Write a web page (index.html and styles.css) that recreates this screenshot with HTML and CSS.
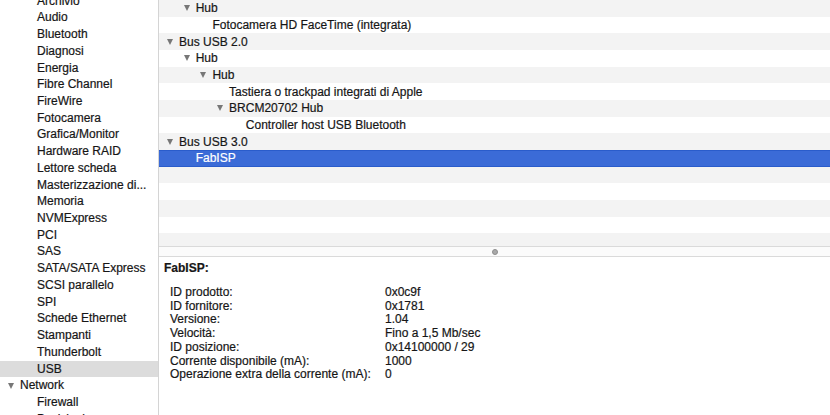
FILE: index.html
```html
<!DOCTYPE html>
<html lang="it">
<head>
<meta charset="utf-8">
<title>Informazioni di sistema - USB</title>
<link rel="stylesheet" href="styles.css">
</head>
<body>
<div class="window">
  <aside class="sidebar">
    <ul class="side-list">
      <li class="side-item">Archivio</li>
      <li class="side-item">Audio</li>
      <li class="side-item">Bluetooth</li>
      <li class="side-item">Diagnosi</li>
      <li class="side-item">Energia</li>
      <li class="side-item">Fibre Channel</li>
      <li class="side-item">FireWire</li>
      <li class="side-item">Fotocamera</li>
      <li class="side-item">Grafica/Monitor</li>
      <li class="side-item">Hardware RAID</li>
      <li class="side-item">Lettore scheda</li>
      <li class="side-item">Masterizzazione di...</li>
      <li class="side-item">Memoria</li>
      <li class="side-item">NVMExpress</li>
      <li class="side-item">PCI</li>
      <li class="side-item">SAS</li>
      <li class="side-item">SATA/SATA Express</li>
      <li class="side-item">SCSI parallelo</li>
      <li class="side-item">SPI</li>
      <li class="side-item">Schede Ethernet</li>
      <li class="side-item">Stampanti</li>
      <li class="side-item">Thunderbolt</li>
      <li class="side-item is-selected">USB</li>
      <li class="side-group"><span class="disclosure"></span>Network</li>
      <li class="side-item">Firewall</li>
      <li class="side-item">Posizioni</li>
    </ul>
  </aside>
  <main class="content">
    <div class="tree">
      <div class="row lvl1"><span class="disclosure"></span>Hub</div>
      <div class="row lvl2 leaf">Fotocamera HD FaceTime (integrata)</div>
      <div class="row lvl0"><span class="disclosure"></span>Bus USB 2.0</div>
      <div class="row lvl1"><span class="disclosure"></span>Hub</div>
      <div class="row lvl2"><span class="disclosure"></span>Hub</div>
      <div class="row lvl3 leaf">Tastiera o trackpad integrati di Apple</div>
      <div class="row lvl3"><span class="disclosure"></span>BRCM20702 Hub</div>
      <div class="row lvl4 leaf">Controller host USB Bluetooth</div>
      <div class="row lvl0"><span class="disclosure"></span>Bus USB 3.0</div>
      <div class="row lvl1 leaf is-selected">FabISP</div>
      <div class="row"></div>
      <div class="row"></div>
      <div class="row"></div>
      <div class="row"></div>
      <div class="row"></div>
    </div>
    <div class="splitter"><span class="grip"></span></div>
    <section class="details">
      <h2 class="details-title">FabISP:</h2>
      <dl class="props">
        <dt>ID prodotto:</dt><dd>0x0c9f</dd>
        <dt>ID fornitore:</dt><dd>0x1781</dd>
        <dt>Versione:</dt><dd>1.04</dd>
        <dt>Velocità:</dt><dd>Fino a 1,5 Mb/sec</dd>
        <dt>ID posizione:</dt><dd>0x14100000 / 29</dd>
        <dt>Corrente disponibile (mA):</dt><dd>1000</dd>
        <dt>Operazione extra della corrente (mA):</dt><dd>0</dd>
      </dl>
    </section>
  </main>
</div>
</body>
</html>
```
FILE: styles.css
```css
* { box-sizing: border-box; }
html, body {
  margin: 0;
  padding: 0;
  background: #ffffff;
}
body {
  font-family: "Liberation Sans", Arial, sans-serif;
  font-size: 12px;
  color: #161616;
  -webkit-text-stroke: 0.2px currentColor;
}
.window {
  display: flex;
  width: 830px;
  height: 415px;
  overflow: hidden;
}
.sidebar {
  width: 159px;
  flex: none;
  border-right: 1px solid #d4d4d4;
  overflow: hidden;
  background: #ffffff;
}
.side-list {
  list-style: none;
  margin: -7.3px 0 0 0;
  padding: 0;
}
.side-item,
.side-group {
  height: 16.72px;
  line-height: 16.72px;
  white-space: nowrap;
  display: flex;
  align-items: center;
}
.side-item { padding-left: 37px; }
.side-group { padding-left: 8px; }
.side-item.is-selected { background: #dcdcdc; }
.disclosure {
  width: 0;
  height: 0;
  border-left: 3.5px solid transparent;
  border-right: 3.5px solid transparent;
  border-top: 6px solid #777777;
  margin-right: 6px;
  flex: none;
}
.content {
  flex: 1;
  display: flex;
  flex-direction: column;
  min-width: 0;
}
.tree {
  height: 246px;
  overflow: hidden;
  flex: none;
}
.row {
  height: 16.67px;
  display: flex;
  align-items: center;
  white-space: nowrap;
  background: #f3f3f3;
}
.row:nth-child(even) { background: #ffffff; }
.row.is-selected {
  background: #3b6bd7;
  color: #ffffff;
  border-top: 1px solid #2a5ccb;
  border-bottom: 1px solid #2a5ccb;
}
.lvl0 { padding-left: 8px; }
.lvl1 { padding-left: 24.7px; }
.lvl2 { padding-left: 41.4px; }
.lvl3 { padding-left: 58.1px; }
.lvl4 { padding-left: 74.8px; }
.lvl0.leaf { padding-left: 20px; }
.lvl1.leaf { padding-left: 36.7px; }
.lvl2.leaf { padding-left: 53.4px; }
.lvl3.leaf { padding-left: 70.1px; }
.lvl4.leaf { padding-left: 86.8px; }
.splitter {
  height: 11px;
  flex: none;
  border-top: 1px solid #dadada;
  border-bottom: 1px solid #dadada;
  background: #fbfbfb;
  display: flex;
  align-items: center;
  justify-content: center;
}
.grip {
  width: 6px;
  height: 6px;
  border-radius: 50%;
  background: #a9a9a9;
  border: 1px solid #8e8e8e;
}
.details {
  flex: 1;
  padding: 4px 0 0 5px;
  background: #ffffff;
}
.details-title {
  margin: 0;
  font-size: 12px;
  font-weight: bold;
  line-height: 14px;
}
.props {
  margin: 11px 0 0 6px;
  display: grid;
  grid-template-columns: 215px auto;
  line-height: 13.7px;
}
.props dt, .props dd { margin: 0; white-space: nowrap; }
```
